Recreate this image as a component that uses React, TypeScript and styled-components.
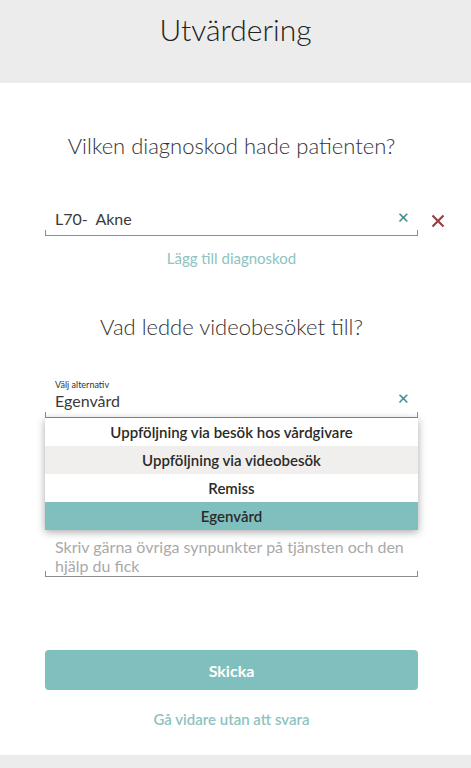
import { FC } from 'react';
import styled, { createGlobalStyle } from 'styled-components';

const GlobalStyle = createGlobalStyle`
  html, body {
    margin: 0;
    padding: 0;
    background: #fff;
  }
  body {
    font-family: Lato, "Open Sans", sans-serif;
    color: #333;
  }
`;

const TEAL = '#7fbfbd';

const Page = styled.div`
  width: 471px;
  min-height: 768px;
  display: flex;
  flex-direction: column;
`;

const Header = styled.header`
  height: 83px;
  background: #ececec;
  display: flex;
  justify-content: center;
  padding-top: 9px;
  box-sizing: border-box;
`;

const Title = styled.h1`
  margin: 0;
  font-size: 30px;
  font-weight: 300;
  line-height: 40px;
  color: #222;
`;

const Main = styled.main`
  flex: 1;
  display: flex;
  flex-direction: column;
  padding: 49px 53px 0 45px;
`;

const Question = styled.h2<{ $top?: number }>`
  margin: ${(p) => p.$top ?? 0}px 0 0;
  font-size: 22px;
  font-weight: 300;
  line-height: 28px;
  text-align: center;
  color: #333;
`;

const FieldRow = styled.div`
  display: flex;
  align-items: flex-end;
  margin-right: -40px;
`;

const Field = styled.div<{ $top?: number; $height: number; $pad?: number }>`
  position: relative;
  flex: 1;
  margin-top: ${(p) => p.$top ?? 0}px;
  height: ${(p) => p.$height}px;
  border-bottom: 1px solid #8c8c8c;
  display: flex;
  flex-direction: column;
  justify-content: flex-end;
  padding: 0 10px ${(p) => p.$pad ?? 6}px;
  box-sizing: border-box;

  &::before,
  &::after {
    content: '';
    position: absolute;
    bottom: 0;
    width: 1px;
    height: 5px;
    background: #8c8c8c;
  }
  &::before {
    left: 0;
  }
  &::after {
    right: 0;
  }
`;

const Value = styled.div`
  font-size: 16px;
  line-height: 20px;
  color: #3a3a3a;
`;

const Label = styled.div`
  font-size: 9px;
  line-height: 12px;
  color: #333;
`;

const Placeholder = styled.div`
  font-size: 16px;
  line-height: 19px;
  color: #a9a9a9;
`;

const ClearIcon = styled.span<{ $top: number }>`
  position: absolute;
  right: 8px;
  top: ${(p) => p.$top}px;
  color: #3f8e8d;
  font-size: 15px;
  line-height: 15px;
`;

const RemoveButton = styled.button`
  width: 40px;
  height: 24px;
  margin-bottom: 3px;
  border: none;
  background: none;
  padding: 0;
  display: flex;
  align-items: center;
  justify-content: center;
`;

const TextLink = styled.a<{ $bold?: boolean; $top: number }>`
  display: block;
  margin-top: ${(p) => p.$top}px;
  text-align: center;
  font-size: 15px;
  line-height: 20px;
  font-weight: ${(p) => (p.$bold ? 600 : 400)};
  color: #8dc3c2;
  text-decoration: none;
`;

const SelectWrap = styled.div`
  position: relative;
`;

const Menu = styled.ul`
  position: absolute;
  top: 100%;
  left: 0;
  right: 0;
  margin: 0;
  padding: 0;
  list-style: none;
  background: #fff;
  box-shadow: 0 2px 8px rgba(0, 0, 0, 0.35);
  z-index: 2;
`;

const Option = styled.li<{ $tone: 'plain' | 'muted' | 'active' }>`
  height: 28px;
  display: flex;
  align-items: center;
  justify-content: center;
  font-size: 15px;
  font-weight: 600;
  color: #2a2a2a;
  background: ${(p) =>
    p.$tone === 'active' ? TEAL : p.$tone === 'muted' ? '#f0efed' : '#fff'};
`;

const SubmitButton = styled.button`
  margin-top: 73px;
  height: 40px;
  border: none;
  border-radius: 4px;
  background: ${TEAL};
  color: #fff;
  font-family: inherit;
  font-size: 16px;
  font-weight: 700;
`;

const Footer = styled.footer`
  height: 13px;
  margin-top: 26px;
  background: #ececec;
`;

const BigX: FC = () => (
  <svg width="14" height="14" viewBox="0 0 14 14">
    <path d="M1.5 1.5 L12.5 12.5 M12.5 1.5 L1.5 12.5" stroke="#9b3d47" strokeWidth="2.2" />
  </svg>
);

const options = [
  { label: 'Uppföljning via besök hos vårdgivare', tone: 'plain' as const },
  { label: 'Uppföljning via videobesök', tone: 'muted' as const },
  { label: 'Remiss', tone: 'plain' as const },
  { label: 'Egenvård', tone: 'active' as const },
];

const App: FC = () => (
  <Page>
    <GlobalStyle />
    <Header>
      <Title>Utvärdering</Title>
    </Header>
    <Main>
      <Question>Vilken diagnoskod hade patienten?</Question>
      <FieldRow>
        <Field $top={44} $height={32}>
          <Value>L70-&nbsp;&nbsp;Akne</Value>
          <ClearIcon $top={6}>✕</ClearIcon>
        </Field>
        <RemoveButton aria-label="Ta bort">
          <BigX />
        </RemoveButton>
      </FieldRow>
      <TextLink $top={12}>Lägg till diagnoskod</TextLink>
      <Question $top={45}>Vad ledde videobesöket till?</Question>
      <SelectWrap>
        <Field $top={35} $height={42}>
          <Label>Välj alternativ</Label>
          <Value>Egenvård</Value>
          <ClearIcon $top={15}>✕</ClearIcon>
        </Field>
        <Menu>
          {options.map((o) => (
            <Option key={o.label} $tone={o.tone}>
              {o.label}
            </Option>
          ))}
        </Menu>
      </SelectWrap>
      <Field $top={22} $height={140} $pad={1}>
        <Placeholder>
          Skriv gärna övriga synpunkter på tjänsten och den
          <br />
          hjälp du fick
        </Placeholder>
      </Field>
      <SubmitButton>Skicka</SubmitButton>
      <TextLink $bold $top={19}>
        Gå vidare utan att svara
      </TextLink>
    </Main>
    <Footer />
  </Page>
);

export default App;
